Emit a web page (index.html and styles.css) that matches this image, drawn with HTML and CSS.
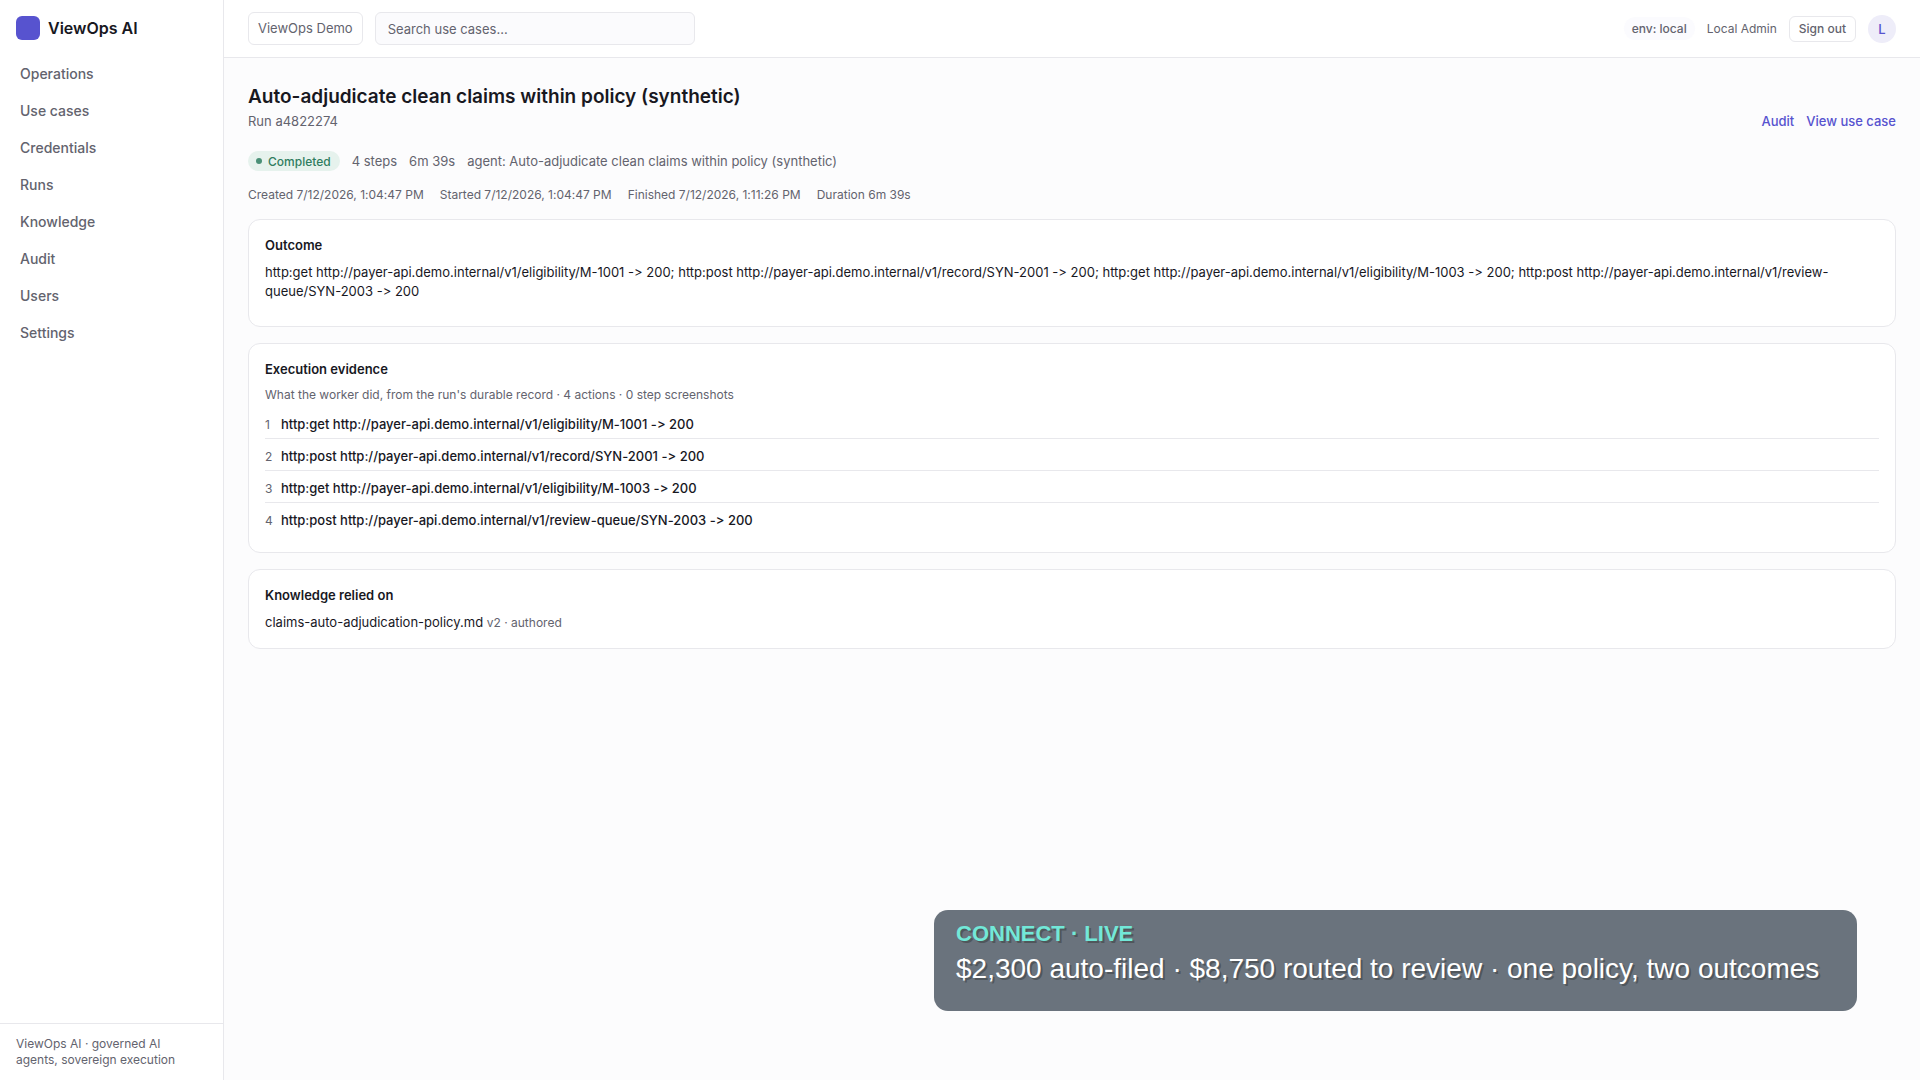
FILE: index.html
```html
<!DOCTYPE html>
<html lang="en">
<head>
<meta charset="utf-8">
<meta name="viewport" content="width=device-width, initial-scale=1">
<title>Run a4822274 - ViewOps AI</title>
<link rel="stylesheet" href="styles.css">
</head>
<body>
<div class="app">
  <aside class="sidebar">
    <div class="brand"><span class="brand-mark"></span>ViewOps AI</div>
    <nav class="nav" aria-label="Main">
      <a href="#operations">Operations</a>
      <a href="#use-cases">Use cases</a>
      <a href="#credentials">Credentials</a>
      <a href="#runs">Runs</a>
      <a href="#knowledge">Knowledge</a>
      <a href="#audit">Audit</a>
      <a href="#users">Users</a>
      <a href="#settings">Settings</a>
    </nav>
    <div class="sidebar-foot">ViewOps AI · governed AI agents, sovereign execution</div>
  </aside>
  <div class="content">
    <header class="topbar">
      <button class="workspace" type="button">ViewOps Demo</button>
      <input class="search" type="search" placeholder="Search use cases..." aria-label="Search use cases">
      <div class="account">
        <span class="env">env: local</span>
        <span class="user">Local Admin</span>
        <button class="signout" type="button">Sign out</button>
        <span class="avatar">L</span>
      </div>
    </header>
    <main class="main">
      <div class="page-head">
        <div>
          <h1>Auto-adjudicate clean claims within policy (synthetic)</h1>
          <p class="run-id">Run a4822274</p>
        </div>
        <div class="links">
          <a href="#audit">Audit</a>
          <a href="#use-case">View use case</a>
        </div>
      </div>
      <div class="status">
        <span class="badge"><span class="dot"></span>Completed</span>
        <span>4 steps</span>
        <span>6m 39s</span>
        <span>agent: Auto-adjudicate clean claims within policy (synthetic)</span>
      </div>
      <div class="times">
        <span>Created 7/12/2026, 1:04:47 PM</span>
        <span>Started 7/12/2026, 1:04:47 PM</span>
        <span>Finished 7/12/2026, 1:11:26 PM</span>
        <span>Duration 6m 39s</span>
      </div>
      <section class="card outcome">
        <h2>Outcome</h2>
        <p>http:get http://payer-api.demo.internal/v1/eligibility/M-1001 -&gt; 200; http:post http://payer-api.demo.internal/v1/record/SYN-2001 -&gt; 200; http:get http://payer-api.demo.internal/v1/eligibility/M-1003 -&gt; 200; http:post http://payer-api.demo.internal/v1/review-queue/SYN-2003 -&gt; 200</p>
      </section>
      <section class="card">
        <h2>Execution evidence</h2>
        <p class="note">What the worker did, from the run's durable record · 4 actions · 0 step screenshots</p>
        <ol class="steps">
          <li><span class="num">1</span>http:get http://payer-api.demo.internal/v1/eligibility/M-1001 -&gt; 200</li>
          <li><span class="num">2</span>http:post http://payer-api.demo.internal/v1/record/SYN-2001 -&gt; 200</li>
          <li><span class="num">3</span>http:get http://payer-api.demo.internal/v1/eligibility/M-1003 -&gt; 200</li>
          <li><span class="num">4</span>http:post http://payer-api.demo.internal/v1/review-queue/SYN-2003 -&gt; 200</li>
        </ol>
      </section>
      <section class="card">
        <h2>Knowledge relied on</h2>
        <p>claims-auto-adjudication-policy.md <small>v2 · authored</small></p>
      </section>
    </main>
  </div>
</div>
<div class="caption">
  <strong>CONNECT · LIVE</strong>
  <span>$2,300 auto-filed · $8,750 routed to review · one policy, two outcomes</span>
</div>
</body>
</html>
```
FILE: styles.css
```css
:root {
  --ink: #18181f;
  --muted: #63636e;
  --line: #e8e8ec;
  --accent: #5753cf;
}
* { box-sizing: border-box; }
body {
  margin: 0;
  background: #fcfcfd;
  color: var(--ink);
  font: 13px/19px Inter, sans-serif;
  font-feature-settings: "calt" 0;
}
h1, h2, p, ol { margin: 0; padding: 0; }
a { text-decoration: none; }
button, input { font: inherit; color: var(--muted); }
.app {
  display: grid;
  grid-template-columns: 224px minmax(0, 1fr);
  min-height: 100vh;
}
.sidebar {
  display: flex;
  flex-direction: column;
  background: #fff;
  border-right: 1px solid var(--line);
}
.brand {
  display: flex;
  align-items: center;
  gap: 8px;
  height: 56px;
  padding: 0 16px;
  font-size: 16px;
  font-weight: 600;
}
.brand-mark {
  width: 24px;
  height: 24px;
  border-radius: 6px;
  background: var(--accent);
}
.nav {
  display: flex;
  flex-direction: column;
  gap: 2px;
  padding: 0 8px;
}
.nav a {
  padding: 8px 12px;
  color: var(--muted);
  font-size: 14px;
  font-weight: 500;
}
.sidebar-foot {
  margin-top: auto;
  padding: 12px 24px 12px 16px;
  border-top: 1px solid var(--line);
  color: var(--muted);
  font-size: 12px;
  line-height: 16px;
}
.topbar {
  display: flex;
  align-items: center;
  gap: 12px;
  height: 58px;
  padding: 0 24px;
  background: #fff;
  border-bottom: 1px solid var(--line);
}
.workspace, .search, .signout {
  border: 1px solid var(--line);
  border-radius: 6px;
  background: #fff;
}
.workspace { height: 33px; padding: 0 9px; }
.search {
  width: 320px;
  height: 33px;
  padding: 0 12px;
  background: #fbfbfd;
}
.search::placeholder { color: var(--muted); opacity: 1; }
.account {
  display: flex;
  align-items: center;
  gap: 12px;
  margin-left: auto;
  color: var(--muted);
  font-size: 12px;
}
.env {
  padding: 2px 8px;
  border-radius: 12px;
  background: #fbfbfe;
  font-weight: 500;
}
.signout { height: 26px; padding: 0 9px; font-weight: 500; }
.avatar {
  width: 28px;
  height: 28px;
  border-radius: 50%;
  background: #eeedf9;
  color: var(--accent);
  font-size: 13px;
  line-height: 28px;
  text-align: center;
  font-weight: 500;
}
.main { padding: 24px; }
.page-head {
  display: flex;
  justify-content: space-between;
  align-items: flex-end;
  margin-bottom: 20px;
}
h1 { font-size: 19px; line-height: 30px; font-weight: 600; }
.run-id { color: var(--muted); }
.links { display: flex; gap: 12px; }
.links a { color: var(--accent); font-weight: 500; }
.status, .times {
  display: flex;
  align-items: center;
  color: var(--muted);
}
.status { gap: 12px; margin-bottom: 14px; }
.badge {
  display: flex;
  align-items: center;
  gap: 6px;
  height: 20px;
  padding: 0 9px 0 8px;
  border-radius: 10px;
  background: #e6f2ed;
  color: #2f7d5f;
  font-size: 12px;
  font-weight: 500;
}
.dot {
  width: 6px;
  height: 6px;
  border-radius: 50%;
  background: #4a9077;
}
.times { gap: 16px; margin-bottom: 15px; font-size: 12px; }
.card {
  margin-bottom: 16px;
  padding: 16px;
  border: 1px solid var(--line);
  border-radius: 12px;
  background: #fff;
}
.outcome { padding-bottom: 25px; }
h2 {
  margin-bottom: 8px;
  font-size: 13px;
  line-height: 19px;
  font-weight: 600;
}
small, .note { color: var(--muted); font-size: 12px; }
.note { line-height: 16px; }
.steps { margin-top: 4px; list-style: none; }
.steps li {
  display: flex;
  gap: 8px;
  padding: 8px 0 4px;
  border-bottom: 1px solid var(--line);
  font-weight: 500;
}
.steps li:last-child { padding-bottom: 6px; border-bottom: 0; }
.num {
  width: 8px;
  color: var(--muted);
  font-size: 12px;
  font-weight: 400;
}
.caption {
  position: fixed;
  right: 63px;
  bottom: 69px;
  display: flex;
  flex-direction: column;
  min-width: 923px;
  padding: 10px 22px 21px;
  border-radius: 14px;
  background: #6a737d;
  color: #fff;
  font: 28px/42px "Liberation Sans", sans-serif;
  text-shadow: 2px 2px 0 #50565b;
}
.caption strong {
  color: #72e8d8;
  font-size: 22px;
  line-height: 28px;
}
```
